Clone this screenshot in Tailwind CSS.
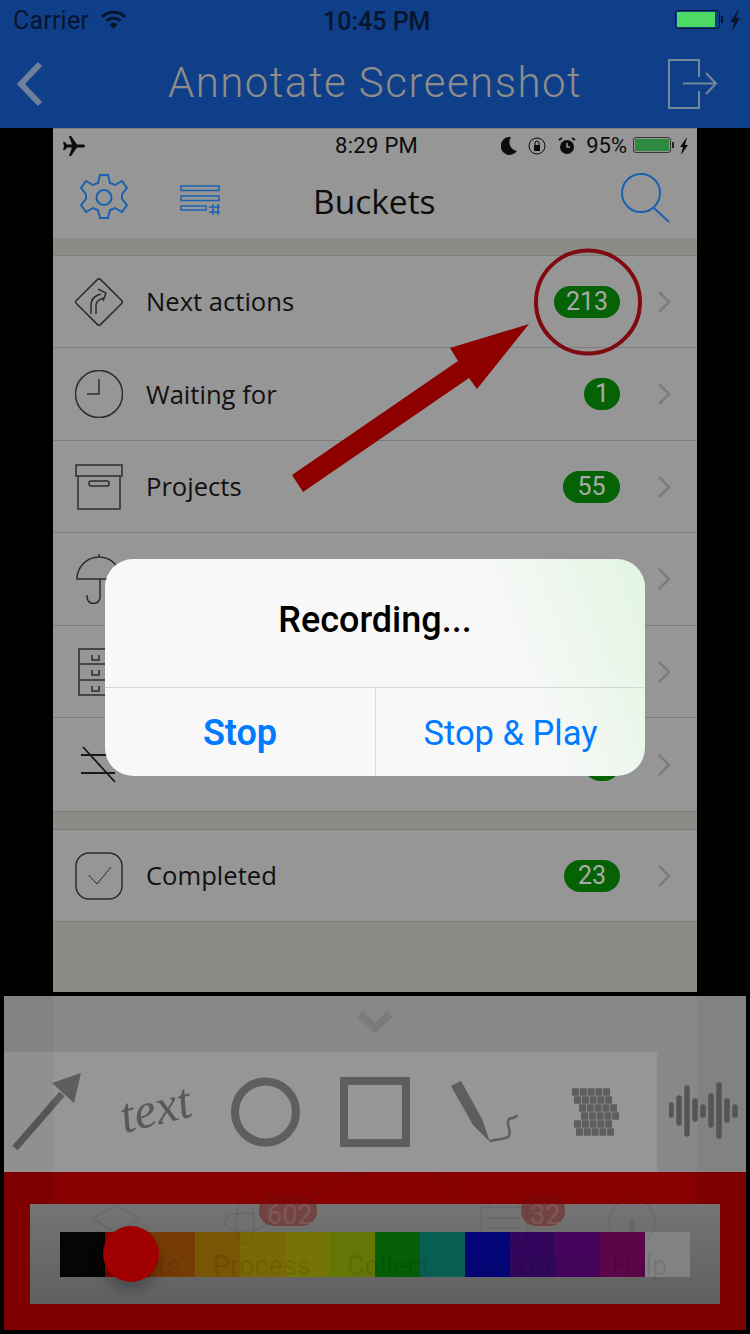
<!DOCTYPE html>
<html><head><meta charset="utf-8"><script src="https://cdn.jsdelivr.net/npm/@tailwindcss/browser@4"></script></head>
<body class="bg-black">
<div class="relative w-[750px] h-[1334px] bg-black overflow-hidden flex flex-col font-['Roboto',sans-serif]">
  <!-- app header -->
  <header class="h-[128px] bg-[#0f3f88] flex flex-col shrink-0">
    <div class="relative h-[40px] flex items-center justify-between pl-[13px] pr-[10px] text-[#07152e]">
      <div class="flex items-center gap-[12px]"><span class="text-[25px] tracking-[0.2px] mt-[2px]">Carrier</span>
        <svg class="w-[25px] h-[20px]" viewBox="0 0 25 20"><path d="M1 7a16.500 16.500 0 0 1 23 0" fill="none" stroke="currentColor" stroke-width="3"/><path d="M5.500 11a10 10 0 0 1 14 0" fill="none" stroke="currentColor" stroke-width="3"/><path d="M8.500 14.500a5.500 5.500 0 0 1 8 0L12.500 19z" fill="currentColor"/></svg></div>
      <span class="absolute left-[323px] top-[3px] text-[25px] font-medium whitespace-nowrap">10:45 PM</span>
      <svg class="w-[65px] h-[24px]" viewBox="0 0 65 24"><rect x="0.500" y="2.500" width="44" height="18" rx="3" fill="none" stroke="currentColor"/><rect x="2" y="4" width="38" height="15" fill="#4cd964"/><rect x="46" y="8" width="2" height="7" fill="currentColor"/><path d="M64 1l-9 13h4l-2 9 8-13h-4z" fill="currentColor"/></svg>
    </div>
    <div class="relative flex-1 flex items-center justify-between pl-[17px] pr-[32px]">
      <svg class="w-[26px] h-[44px]" viewBox="0 0 26 44"><path d="M23 2L4 22l19 20" fill="none" stroke="#6d7f9b" stroke-width="6"/></svg>
      <span class="absolute inset-x-0 top-[11px] text-center text-[42px] font-light text-[#8f8d89] tracking-[1.5px] whitespace-nowrap">Annotate Screenshot</span>
      <svg class="w-[50px] h-[50px]" viewBox="0 0 50 50"><path d="M31 18V1H1v48h30V32M15 24.500h32M38 14l10 10.500L38 35" fill="none" stroke="#76869c" stroke-width="2"/></svg>
    </div>
  </header>

  <!-- screenshot -->
  <main class="relative ml-[53px] w-[644px] h-[864px] shrink-0 bg-[#8c8b85] flex flex-col border-t border-[#7f7f7f]">
    <div class="bg-[#969696] h-[109px] flex flex-col">
      <div class="relative h-[33px] flex items-center justify-between pl-[10px] pr-[9px] text-[#0c0c0c]">
        <svg class="w-[22px] h-[20px]" viewBox="0 0 22 20"><path d="M22 10c0-1-1-1.500-3-1.500h-5L8 0H6l3 8.500H4L2 6H0l1 4-1 4h2l2-2.500h5L6 20h2l6-8.500h5c2 0 3-.5 3-1.500z" fill="currentColor"/></svg>
        <span class="absolute left-[282px] top-[3px] text-[22px] tracking-[0.3px] whitespace-nowrap leading-[28px]">8:29 PM</span>
        <div class="flex items-center gap-[6px]">
          <svg class="w-[76px] h-[20px] mr-[3px]" viewBox="0 0 76 20"><path d="M10 1a9 9 0 1 0 6 14A9 9 0 0 1 10 1z" fill="currentColor"/><circle cx="36" cy="10" r="8" fill="none" stroke="currentColor"/><rect x="33" y="9" width="6" height="6" fill="currentColor"/><path d="M34 9V7a2 2 0 0 1 4 0v2" fill="none" stroke="currentColor"/><circle cx="66" cy="11" r="7" fill="currentColor"/><path d="M66 7v4h3" stroke="#999" stroke-width="1.500" fill="none"/><path d="M58 4l3-2M74 4l-3-2" stroke="currentColor" stroke-width="2"/></svg>
          <span class="text-[22px] leading-[28px]">95%</span>
          <svg class="w-[55px] h-[20px]" viewBox="0 0 55 20"><rect x="0.500" y="1.500" width="37" height="15" rx="2.500" fill="none" stroke="#333"/><rect x="2" y="3" width="34" height="12" fill="#2d8a3e"/><rect x="39" y="6" width="2" height="6" fill="#222"/><path d="M54 1l-7 10h3l-2 8 7-10h-3z" fill="currentColor"/></svg>
        </div>
      </div>
      <div class="relative flex-1 flex items-center justify-between pl-[26px] pr-[26px]">
        <div class="flex items-center gap-[51px]">
          <svg class="w-[50px] h-[50px] mt-[-4px]" viewBox="0 0 50 50"><g fill="none" stroke="#1a62b0" stroke-width="2"><path d="M21 2h8l2 8 5 2 7-4 5 7-5 6v5l5 6-5 7-7-4-5 2-2 8h-8l-2-8-5-2-7 4-5-7 5-6v-5L2 15l5-7 7 4 5-2z"/><circle cx="25" cy="24.500" r="7.500"/></g></svg>
          <svg class="w-[41px] h-[30px] mt-[-1px]" viewBox="0 0 41 30"><g fill="none" stroke="#1a62b0" stroke-width="1.500"><rect x="1" y="1" width="38" height="4.500"/><rect x="1" y="11" width="38" height="4.500"/><rect x="1" y="21" width="25" height="4"/><path d="M33 19v11M38 19v11M29 22h11M29 27h11"/></g></svg>
        </div>
        <svg class="w-[50px] h-[50px] mt-[-4px]" viewBox="0 0 50 50"><circle cx="20" cy="20" r="19" fill="none" stroke="#1a62b0" stroke-width="2"/><path d="M33 35l15 14" stroke="#1a62b0" stroke-width="2"/></svg>
        <span class="absolute left-[260px] top-[14px] font-['Open_Sans'] text-[33.500px] text-[#0c0c0c] whitespace-nowrap">Buckets</span>
      </div>
    </div>
    <div class="h-[17px]"></div>
    <div class="bg-[#969696] border-t border-[#7d7d7d] flex flex-col">
      <div class="h-[92px] border-b border-[#7d7d7d] flex items-center pl-[22px] pr-[26px]">
        <svg class="w-[48px] h-[48px] shrink-0" viewBox="0 0 48 48"><g fill="none" stroke="#2c2c2c" stroke-width="1.500"><rect x="7" y="7" width="34" height="34" rx="2" transform="rotate(45 24 24)"/><path d="M16 36V27q0-7 7-10l3-1M23 11l8 4-3 8M21 36v-8q0-5 5-7l3-1"/></g></svg>
        <span class="ml-[23px] mt-[2px] text-[25.600px] font-['Open_Sans'] text-[#111]">Next actions</span>
        <span class="ml-auto h-[32px] w-[66px] rounded-full bg-[#056205] text-[#aaaaaa] text-[25px] flex items-center justify-center">213</span>
        <svg class="w-[14px] h-[22px] ml-[37px] shrink-0" viewBox="0 0 14 22"><path d="M2 1l10 10L2 21" fill="none" stroke="#7d7d7d" stroke-width="2.500"/></svg>
      </div>
      <div class="h-[93px] border-b border-[#7d7d7d] flex items-center pl-[22px] pr-[26px]">
        <svg class="w-[48px] h-[48px] shrink-0" viewBox="0 0 48 48"><g fill="none" stroke="#2c2c2c" stroke-width="1.500"><circle cx="24" cy="24" r="23.500"/><path d="M24 9v15H12"/></g></svg>
        <span class="ml-[23px] mt-[2px] text-[25.600px] font-['Open_Sans'] text-[#111]">Waiting for</span>
        <span class="ml-auto h-[32px] w-[36px] rounded-full bg-[#056205] text-[#aaaaaa] text-[25px] flex items-center justify-center">1</span>
        <svg class="w-[14px] h-[22px] ml-[37px] shrink-0" viewBox="0 0 14 22"><path d="M2 1l10 10L2 21" fill="none" stroke="#7d7d7d" stroke-width="2.500"/></svg>
      </div>
      <div class="h-[92px] border-b border-[#7d7d7d] flex items-center pl-[22px] pr-[26px]">
        <svg class="w-[48px] h-[46px] shrink-0" viewBox="0 0 48 46"><g fill="none" stroke="#2c2c2c" stroke-width="1.500"><rect x="1" y="1" width="46" height="11"/><path d="M3 12v33h42V12"/><rect x="14" y="17" width="20" height="5" rx="2"/></g></svg>
        <span class="ml-[23px] mt-[2px] text-[25.600px] font-['Open_Sans'] text-[#111]">Projects</span>
        <span class="ml-auto h-[32px] w-[57px] rounded-full bg-[#056205] text-[#aaaaaa] text-[25px] flex items-center justify-center">55</span>
        <svg class="w-[14px] h-[22px] ml-[37px] shrink-0" viewBox="0 0 14 22"><path d="M2 1l10 10L2 21" fill="none" stroke="#7d7d7d" stroke-width="2.500"/></svg>
      </div>
      <div class="h-[93px] border-b border-[#7d7d7d] flex items-center pl-[22px] pr-[26px]">
        <svg class="w-[48px] h-[50px] shrink-0" viewBox="0 0 48 50"><g fill="none" stroke="#2c2c2c" stroke-width="1.500"><path d="M2 25a22 22 0 0 1 44 0zM24 0v3M25 25v18a6.500 6.500 0 0 1-13 0v-2"/></g></svg>
        <svg class="w-[14px] h-[22px] ml-auto shrink-0" viewBox="0 0 14 22"><path d="M2 1l10 10L2 21" fill="none" stroke="#7d7d7d" stroke-width="2.500"/></svg>
      </div>
      <div class="h-[92px] border-b border-[#7d7d7d] flex items-center pl-[25px] pr-[26px]">
        <svg class="w-[48px] h-[48px] shrink-0" viewBox="0 0 48 48"><g fill="none" stroke="#2c2c2c" stroke-width="1.500"><rect x="1" y="1" width="44" height="46"/><path d="M1 16h44M1 32h44M14 7v5h7v-5M14 22v5h7v-5M14 38v5h7v-5"/></g></svg>
        <svg class="w-[14px] h-[22px] ml-auto shrink-0" viewBox="0 0 14 22"><path d="M2 1l10 10L2 21" fill="none" stroke="#7d7d7d" stroke-width="2.500"/></svg>
      </div>
      <div class="h-[93px] flex items-center pl-[27px] pr-[26px]">
        <svg class="w-[38px] h-[38px] shrink-0" viewBox="0 0 38 38"><g fill="none" stroke="#1a1a1a" stroke-width="1.800"><path d="M1 9h34M1 27h34M3 1l32 35"/></g></svg>
        <span class="ml-auto h-[32px] w-[36px] rounded-full bg-[#056205]"></span>
        <svg class="w-[14px] h-[22px] ml-[37px] shrink-0" viewBox="0 0 14 22"><path d="M2 1l10 10L2 21" fill="none" stroke="#7d7d7d" stroke-width="2.500"/></svg>
      </div>
    </div>
    <div class="h-[18px] border-t border-[#7d7d7d]"></div>
    <div class="bg-[#969696] border-y border-[#7d7d7d] h-[93px] flex items-center pl-[22px] pr-[26px]">
      <svg class="w-[48px] h-[48px] shrink-0" viewBox="0 0 48 48"><rect x="1" y="1" width="46" height="46" rx="13" fill="none" stroke="#2c2c2c" stroke-width="1.500"/><path d="M13.500 23l8.500 9 14-17" fill="none" stroke="#2c2c2c" stroke-width="1"/></svg>
      <span class="ml-[23px] mt-[2px] text-[25.600px] font-['Open_Sans'] text-[#111]">Completed</span>
      <span class="ml-auto h-[32px] w-[56px] rounded-full bg-[#056205] text-[#aaaaaa] text-[25px] flex items-center justify-center">23</span>
      <svg class="w-[14px] h-[22px] ml-[37px] shrink-0" viewBox="0 0 14 22"><path d="M2 1l10 10L2 21" fill="none" stroke="#7d7d7d" stroke-width="2.500"/></svg>
    </div>

    <!-- annotations on the screenshot -->
    <svg class="absolute left-0 top-0 w-[644px] h-[400px] pointer-events-none" viewBox="53 128 644 400">
      <polygon points="529,323 450,347 458,360 292,474 303,491 469,377 477,388" fill="#8e0000"/>
      <ellipse cx="588" cy="301" rx="52" ry="51.500" fill="none" stroke="#800a12" stroke-width="4"/>
    </svg>
  </main>

  <!-- toolbar panel -->
  <section class="relative mt-[4px] mx-[4px] h-[334px] bg-[#828284] flex flex-col shrink-0">
    <div class="h-[56px] flex justify-center pt-[14px]">
      <svg class="w-[36px] h-[22px]" viewBox="0 0 36 22"><path d="M3 4l15 14L33 4" fill="none" stroke="#747476" stroke-width="8"/></svg>
    </div>
    <div class="relative h-[120px] w-[653px] bg-[#909090]">
      <svg class="absolute left-0 top-0 w-[742px] h-[120px]" viewBox="4 1052 742 120">
        <path d="M15 1148L62 1094" stroke="#555" stroke-width="7"/><polygon points="81,1073 52,1083 74,1103" fill="#555"/>
        <circle cx="265.500" cy="1112" r="30.500" fill="none" stroke="#555" stroke-width="8"/>
        <rect x="344" y="1081" width="62" height="62" fill="none" stroke="#555" stroke-width="8"/>
        <polygon points="451,1086 461,1081 482,1119 490,1142 473,1125" fill="#555"/>
        <path d="M490 1141c8-2 17-2 19-5 3-6-4-12 0-17 2-2 5 1 8-4" fill="none" stroke="#555" stroke-width="2.500"/>
        <g stroke="#555" stroke-width="7.500" stroke-dasharray="7 0.800">
          <path d="M572 1092h38M574 1100h38M579 1108h38M581 1116h38M574 1124h38M576 1132h38"/>
        </g>
      </svg>
      <span class="absolute left-[115px] top-[31px] -rotate-[14deg] font-['Liberation_Serif'] italic text-[50px] leading-none text-[#505050]">text</span>
    </div>
    <div class="relative h-[158px] bg-[#7e0000] pt-[32px] px-[26px]">
      <div class="absolute left-[49px] top-0 w-[644px] h-[102px] bg-[#ff0808]/8"></div>
      <div class="relative h-[100px] bg-linear-to-b from-[#747474] to-[#606060] flex items-center justify-center">
        <div class="flex">
          <div class="w-[45px] h-[45px] bg-[#050505]"></div><div class="w-[45px] h-[45px] bg-[#920000]"></div><div class="w-[45px] h-[45px] bg-[#763c05]"></div><div class="w-[45px] h-[45px] bg-[#795506]"></div><div class="w-[45px] h-[45px] bg-[#7a6905]"></div><div class="w-[45px] h-[45px] bg-[#767405]"></div><div class="w-[45px] h-[45px] bg-[#647605]"></div><div class="w-[45px] h-[45px] bg-[#065e06]"></div><div class="w-[45px] h-[45px] bg-[#085e52]"></div><div class="w-[45px] h-[45px] bg-[#05057a]"></div><div class="w-[45px] h-[45px] bg-[#31065c]"></div><div class="w-[45px] h-[45px] bg-[#46055c]"></div><div class="w-[45px] h-[45px] bg-[#5c0549]"></div><div class="w-[45px] h-[45px] bg-[#828282]"></div>
        </div>
      </div>
      <!-- ghost of the tab bar behind the panel -->
      <div class="absolute left-[49px] top-0 w-[644px] h-[102px] text-[27px] text-black/10">
        <svg class="absolute left-0 top-0 w-[644px] h-[102px]" viewBox="53 1172 644 102">
          <g fill="none" stroke="#000" stroke-opacity="0.08" stroke-width="1.500">
            <path d="M93 1219l23-14 24 14-24 14zM93 1228l23 14 24-14"/>
            <ellipse cx="245" cy="1222" rx="21" ry="9"/><ellipse cx="245" cy="1222" rx="9" ry="22"/>
            <path d="M316 1195c10-14 30-21 58-23M433 1172c10 4 20 12 26 21"/>
            <rect x="481" y="1207" width="46" height="38"/><path d="M490 1200v8M518 1200v8M488 1218h32M488 1228h32"/>
            <circle cx="632" cy="1222" r="23"/><path d="M632 1219v14" stroke-width="4"/>
          </g>
          <rect x="259" y="1195" width="58" height="31" rx="15" fill="#700a0a" fill-opacity="0.45"/>
          <rect x="521" y="1195" width="44" height="31" rx="15" fill="#700a0a" fill-opacity="0.45"/>
        </svg>
        <span class="absolute left-[214px] top-[23px] text-white/10 whitespace-nowrap">602</span>
        <span class="absolute left-[31px] top-[74px] whitespace-nowrap">Buckets</span>
        <span class="absolute left-[160px] top-[74px] whitespace-nowrap">Process</span>
        <span class="absolute left-[294px] top-[74px] whitespace-nowrap">Collect</span>
        <span class="absolute left-[412px] top-[74px] whitespace-nowrap">Due Dates</span>
        <span class="absolute left-[477px] top-[23px] text-white/10 whitespace-nowrap">32</span>
        <span class="absolute left-[559px] top-[74px] whitespace-nowrap">Help</span>
      </div>
      <div class="absolute left-[99px] top-[54px] w-[56px] h-[56px] rounded-full bg-[#a00000] shadow-[0_8px_14px_rgba(0,0,0,0.25)]"></div>
    </div>
    <!-- lighter band of the screenshot showing through -->
    <div class="absolute left-[49px] top-0 w-[644px] h-[176px] bg-white/[0.05]"></div>
    <svg class="absolute left-[665px] top-[56px] w-[72px] h-[120px]" viewBox="669 1052 72 120"><g stroke="#555" stroke-width="5.500" stroke-linecap="round"><path d="M671 1105v10M679 1098v25M687 1088v46M695 1101v18M703 1107v8M711 1096v29M719 1085v51M727 1101v19M735 1107v8"/></g></svg>
  </section>

  <!-- dialog -->
  <div class="absolute left-[105px] top-[559px] w-[540px] h-[217px] rounded-[28px] bg-linear-[250deg] from-[#e2f5e2] via-[#f8f8f8] via-28% to-[#f8f8f8] flex flex-col overflow-hidden">
    <div class="h-[129px] flex items-center justify-center border-b border-[#d4d8d4]"><span class="text-[36px] font-medium text-black mb-[6px]">Recording...</span></div>
    <div class="flex-1 flex">
      <div class="w-[271px] border-r border-[#dddddd] flex items-center justify-center text-[36px] font-semibold text-[#007aff] pt-[2px]">Stop</div>
      <div class="flex-1 flex items-center justify-center text-[34.500px] text-[#007aff] pt-[3px]">Stop &amp; Play</div>
    </div>
  </div>
</div>
</body></html>
